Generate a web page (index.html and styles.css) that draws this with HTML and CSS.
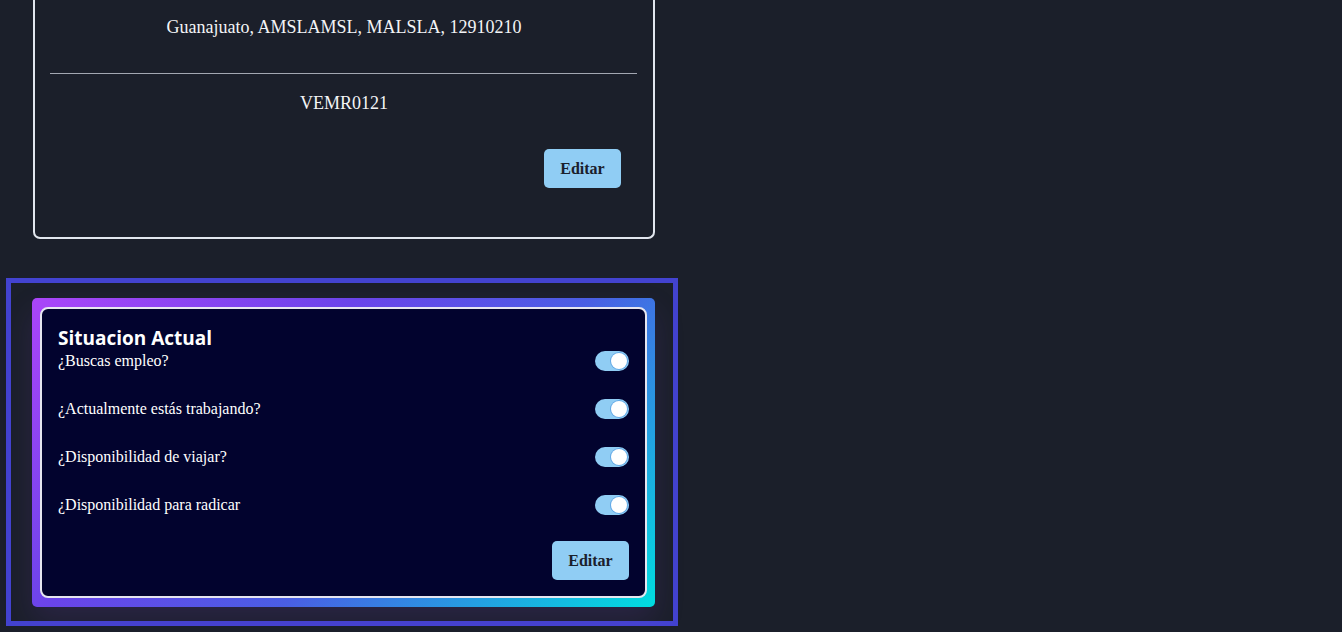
FILE: index.html
```html
<!DOCTYPE html>
<html lang="es">
<head>
<meta charset="utf-8">
<title>Perfil</title>
<link rel="stylesheet" href="styles.css">
</head>
<body>
  <section class="info-card">
    <p class="info-line">Guanajuato, AMSLAMSL, MALSLA, 12910210</p>
    <hr class="divider">
    <p class="info-line code">VEMR0121</p>
    <div class="actions">
      <button class="btn">Editar</button>
    </div>
  </section>

  <section class="status-frame">
    <div class="gradient-card">
      <div class="status-card">
        <h2 class="status-title">Situacion Actual</h2>
        <div class="row"><span class="label">¿Buscas empleo?</span><span class="toggle"><span class="knob"></span></span></div>
        <div class="row"><span class="label">¿Actualmente estás trabajando?</span><span class="toggle"><span class="knob"></span></span></div>
        <div class="row"><span class="label">¿Disponibilidad de viajar?</span><span class="toggle"><span class="knob"></span></span></div>
        <div class="row"><span class="label">¿Disponibilidad para radicar</span><span class="toggle"><span class="knob"></span></span></div>
        <div class="status-actions">
          <button class="btn">Editar</button>
        </div>
      </div>
    </div>
  </section>
</body>
</html>
```

FILE: styles.css
```css
html, body {
  margin: 0;
  padding: 0;
  background: #1b1f2a;
  font-family: "Liberation Serif", "Times New Roman", serif;
  color: #f3f4f6;
}

.info-card {
  margin-left: 33px;
  width: 618px;
  border: 2px solid #e2e6ee;
  border-top: 0;
  border-radius: 0 0 7px 7px;
  padding: 0 0 49px 0;
  display: flex;
  flex-direction: column;
}

.info-line {
  margin: 0;
  text-align: center;
  font-size: 18px;
  line-height: 20px;
  color: #f3f4f6;
}

.info-line:first-child {
  padding-top: 17px;
}

.divider {
  margin: 36px 16px 19px 15px;
  border: 0;
  height: 1px;
  background: #a3a7b2;
}

.actions {
  display: flex;
  justify-content: flex-end;
  padding: 36px 32px 0 0;
}

.btn {
  width: 77px;
  height: 39px;
  border: 0;
  border-radius: 5px;
  background: #90cdf4;
  color: #1a202c;
  font-family: "Liberation Serif", "Times New Roman", serif;
  font-weight: bold;
  font-size: 16px;
  padding: 0;
}

.status-frame {
  margin: 39px 0 0 6px;
  width: 641px;
  height: 323px;
  border: 5px solid #4343d0;
  padding: 15px 0 0 21px;
}

.gradient-card {
  width: 607px;
  height: 291px;
  padding: 9px 8px;
  border-radius: 5px;
  background: linear-gradient(135deg, #ab45f9 0%, #6a44ea 35%, #4a5ee4 60%, #00dde0 100%);
  box-shadow: 0 14px 30px rgba(110, 60, 190, 0.18);
}

.status-card {
  box-sizing: border-box;
  width: 607px;
  height: 291px;
  background: #02032e;
  border: 2px solid #e6e6ef;
  border-radius: 8px;
  padding: 17px 16px 16px 16px;
  display: flex;
  flex-direction: column;
}

.status-title {
  margin: 0;
  font-family: "Open Sans", "Noto Sans", sans-serif;
  font-weight: 700;
  font-size: 19px;
  line-height: 24px;
  color: #ffffff;
}

.row {
  display: flex;
  justify-content: space-between;
  align-items: center;
  height: 20px;
  margin-top: 28px;
}

.status-title + .row {
  margin-top: 1px;
}

.label {
  font-size: 16px;
  color: #ffffff;
}

.toggle {
  width: 34px;
  height: 20px;
  border-radius: 10px;
  background: #90cdf4;
  display: flex;
  align-items: center;
  justify-content: flex-end;
  padding-right: 2px;
  box-sizing: border-box;
}

.knob {
  width: 16px;
  height: 16px;
  border-radius: 50%;
  background: #ffffff;
  box-shadow: 0 0 0 1px #62a8e6;
}

.status-actions {
  margin-top: auto;
  display: flex;
  justify-content: flex-end;
}
```
